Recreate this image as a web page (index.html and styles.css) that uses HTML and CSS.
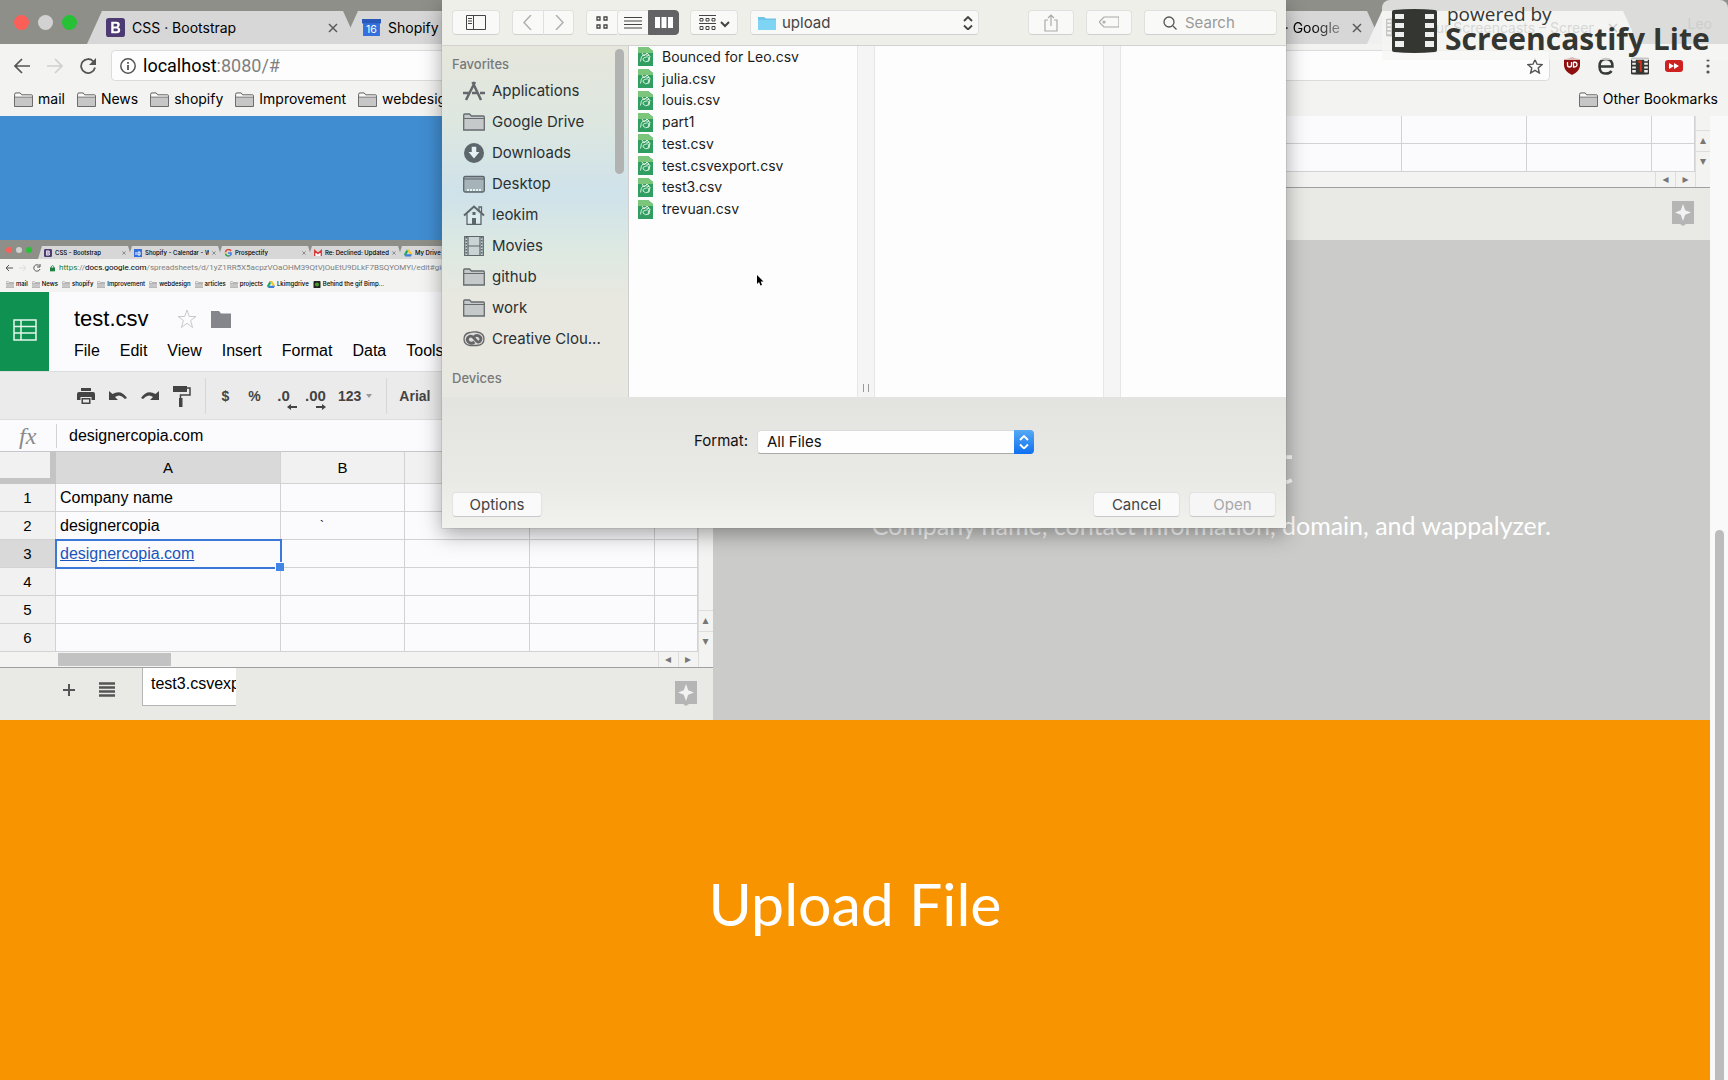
FILE: index.html
```html
<!DOCTYPE html>
<html lang="en">
<head>
<meta charset="utf-8">
<title>Upload File</title>
<link rel="stylesheet" href="styles.css">
</head>
<body>
<svg width="0" height="0" class="defs" aria-hidden="true">
  <symbol id="folder" viewBox="0 0 20 16"><path d="M.5 15.500V2.500Q.5 1 2 1H6.500L8 3H18.500Q19.500 3 19.500 4V15.500Z" fill="#fafafa" stroke="#555"/><path d="M1 6H19V15H1Z" fill="#c6c6c6"/><path d="M1 5.500H19" stroke="#666"/></symbol>
  <symbol id="sfolder" viewBox="0 0 22 18"><path d="M.7 17V2Q.7 1 1.700 1H6.500L8.500 3H20.300Q21.300 3 21.300 4V17Z" fill="#c5c9c9" stroke="#666b6e" stroke-width="1.300"/><path d="M1 5.500H21" stroke="#666b6e"/></symbol>
  <symbol id="explore" viewBox="0 0 22 26"><path d="M0 1H22V24H14L11 26L8 24H0Z" fill="#b5b5b5"/><path d="M11 4L13.200 10.300L19 12.500L13.200 14.700L11 21L8.800 14.700L3 12.500L8.800 10.300Z" fill="#f2f2f2"/></symbol>
  <symbol id="csv" viewBox="0 0 15 19"><path d="M0 0H10L15 4V19H0Z" fill="#2f9e60"/><path d="M0 0H10L15 4V6H0Z" fill="#7cc67b"/><path d="M2.500 14.500Q3 9 5 8T12 9L11 14Q7 16 5 13Q4 11 8 10T10 14M4 6L6 9L9 6L11 8" fill="none" stroke="#d5f0dc"/></symbol>
  <symbol id="close" viewBox="0 0 10 10"><path d="M1 1L9 9M9 1L1 9" stroke="#5a5a5a" stroke-width="1.500"/></symbol>
  <symbol id="drive" viewBox="0 0 14 12"><path d="M5 0H9L14 8H10Z" fill="#f5c518"/><path d="M5 0L0 8L2 12L7 4Z" fill="#1fa463"/><path d="M4 8H14L12 12H2Z" fill="#3c7de0"/></symbol>
  <symbol id="boot" viewBox="0 0 20 20"><rect width="20" height="20" rx="3" fill="#4d3a72"/><path fill-rule="evenodd" d="M5.500 4H11Q14.500 4 14.500 7Q14.500 9 13 9.700Q15 10.300 15 12.800Q15 16 11.300 16H5.500ZM8 6V9H10.500Q12 9 12 7.500Q12 6 10.500 6ZM8 11V14H11Q12.500 14 12.500 12.500Q12.500 11 11 11Z" fill="#fff"/></symbol>
  <symbol id="film" viewBox="0 0 45 44"><path d="M2 1Q22-1 43 1Q45 1 45 3V41Q45 43 43 43Q22 45 2 43Q0 43 0 41V3Q0 1 2 1Z" fill="#343632"/><path d="M3 5H12V10H3ZM3 14H12V19H3ZM3 23H12V28H3ZM3 32H12V38H3ZM33 5H42V10H33ZM33 14H42V19H33ZM33 23H42V28H33ZM33 32H42V38H33Z" fill="#eee"/></symbol>
</svg>

<header class="browser">
  <div class="tabstrip">
    <div class="lights"><i class="red"></i><i class="grey"></i><i class="green"></i></div>
    <nav class="tabs" aria-label="Tabs">
      <div class="tab"><svg class="fav"><use href="#boot"/></svg><span class="grow">CSS · Bootstrap</span><svg class="x"><use href="#close"/></svg></div>
      <div class="tab"><svg class="fav" viewBox="0 0 18 18"><path d="M0 1H18V5H17V17H1V5H0Z" fill="#3470dd"/><path d="M0 1H18V5H0Z" fill="#2a58b8"/><text x="9" y="14" text-anchor="middle" font-size="10" fill="#fff">16</text></svg><span class="grow">Shopify</span></div>
      <div class="tab"></div>
      <div class="tab"></div>
      <div class="tab"><span class="grow end">· Google</span><svg class="x"><use href="#close"/></svg></div>
      <div class="tab active"><svg class="fav"><use href="#film"/></svg><span class="grow">Your Screencasts – Screen</span><svg class="x"><use href="#close"/></svg></div>
    </nav>
    <span class="profile">Leo</span>
  </div>
  <div class="toolbar">
    <svg class="nav" viewBox="0 0 16 16" fill="none" stroke="#555" stroke-width="1.700"><path d="M16 8H1.500M8 1L1 8L8 15"/></svg>
    <svg class="nav" viewBox="0 0 16 16" fill="none" stroke="#d0d0d0" stroke-width="1.700"><path d="M0 8H14.500M8 1L15 8L8 15"/></svg>
    <svg class="nav" viewBox="0 0 16 16"><path d="M13.500 3.500A7 7 0 1 0 15 9.500" fill="none" stroke="#555" stroke-width="1.800"/><path d="M16 0V7H9Z" fill="#555"/></svg>
    <label class="omnibox">
      <svg class="nav" viewBox="0 0 16 16"><circle cx="8" cy="8" r="7.200" fill="none" stroke="#555" stroke-width="1.500"/><path d="M8 7V12M8 4V5.700" stroke="#555" stroke-width="1.800"/></svg>
      <span class="url">localhost<em>:8080/#</em></span>
      <svg class="nav" viewBox="0 0 16 16"><path d="M8 1.500L10 6.200L15 6.600L11.200 9.900L12.400 15L8 12.300L3.600 15L4.800 9.900L1 6.600L6 6.200Z" fill="none" stroke="#555" stroke-width="1.400"/></svg>
    </label>
    <div class="exts">
      <svg viewBox="0 0 18 18"><path d="M9 0Q13 2 17 2V9Q16 15 9 18Q2 15 1 9V2Q5 2 9 0Z" fill="#8e0f10"/><path d="M4.500 5V8Q4.500 10 6.500 10T8.500 8V5M10.500 5V10Q14 10 14 7.500T10.500 5" fill="none" stroke="#fff" stroke-width="1.300"/></svg>
      <svg viewBox="0 0 18 18"><path d="M2 9.500H15.500Q15.500 2 9 2T2.500 9.500T9 16.500Q13 16.500 14.500 14" fill="none" stroke="#343b38" stroke-width="2.500"/></svg>
      <svg viewBox="0 0 45 44"><use href="#film"/><path d="M18 8H27V36H22V14H18Z" fill="#d3301f"/></svg>
      <svg viewBox="0 0 18 18"><rect y="3" width="18" height="12" rx="3" fill="#cf2020"/><path d="M4 6L9 9L4 12ZM9 6L14 9L9 12Z" fill="#fff"/></svg>
      <svg viewBox="0 0 18 18" fill="#555"><circle cx="9" cy="3" r="1.600"/><circle cx="9" cy="9" r="1.600"/><circle cx="9" cy="15" r="1.600"/></svg>
    </div>
  </div>
  <nav class="bookmarks" aria-label="Bookmarks">
    <a href="#"><svg><use href="#folder"/></svg>mail</a>
    <a href="#"><svg><use href="#folder"/></svg>News</a>
    <a href="#"><svg><use href="#folder"/></svg>shopify</a>
    <a href="#"><svg><use href="#folder"/></svg>Improvement</a>
    <a href="#"><svg><use href="#folder"/></svg>webdesign</a>
    <a href="#" class="other"><svg><use href="#folder"/></svg>Other Bookmarks</a>
  </nav>
</header>

<main class="page">
  <div class="content">
    <div class="row">
      <div class="blue"></div>
      <div class="sheet tail">
        <div class="grid-area">
          <div class="grid-main">
            <table class="cells">
              <colgroup><col><col class="c"><col class="c"><col class="c"><col class="e"></colgroup>
              <tr><td></td><td></td><td></td><td></td><td></td></tr>
              <tr><td></td><td></td><td></td><td></td><td></td></tr>
            </table>
            <div class="hscroll"><span class="step">◂</span><span class="step">▸</span></div>
          </div>
          <div class="vscroll"><span class="step">▴</span><span class="step">▾</span></div>
        </div>
        <div class="sheetbar"><svg class="explore"><use href="#explore"/></svg></div>
      </div>
    </div>

    <div class="row">
      <div class="sheet">
        <div class="mini">
          <div class="mini-tabs">
            <div class="mini-lights"><i class="red"></i><i class="grey"></i><i class="green"></i></div>
            <div class="mini-tab"><svg><use href="#boot"/></svg><span>CSS - Bootstrap</span><svg class="mx"><use href="#close"/></svg></div>
            <div class="mini-tab"><svg viewBox="0 0 8 8"><rect width="8" height="8" fill="#3470dd"/><path d="M2 3V6M4 3H6V6H4Z" stroke="#fff" fill="none"/></svg><span>Shopify - Calendar - W</span><svg class="mx"><use href="#close"/></svg></div>
            <div class="mini-tab"><svg viewBox="0 0 8 8" fill="none" stroke-width="1.500"><path d="M7 2A3 3 0 0 0 1.500 3" stroke="#e04030"/><path d="M1.500 3V5" stroke="#f0b818"/><path d="M1.500 5A3 3 0 0 0 6 6.500" stroke="#2ba050"/><path d="M4 4H7V5.500L6 6.500" stroke="#3c7de0"/></svg><span>Prospectify</span><svg class="mx"><use href="#close"/></svg></div>
            <div class="mini-tab"><svg viewBox="0 0 8 8"><path d="M.7 7V1.500L4 4.500L7.300 1.500V7" fill="#fff" stroke="#d33" stroke-width="1.300"/></svg><span>Re: Declined: Updated</span><svg class="mx"><use href="#close"/></svg></div>
            <div class="mini-tab"><svg><use href="#drive"/></svg><span>My Drive</span></div>
          </div>
          <div class="mini-url">
            <svg viewBox="0 0 8 8" fill="none" stroke="#555"><path d="M8 4H1M4 1L1 4L4 7"/></svg>
            <svg viewBox="0 0 8 8" fill="none" stroke="#ddd"><path d="M0 4H7M4 1L7 4L4 7"/></svg>
            <svg viewBox="0 0 8 8" fill="none" stroke="#555"><path d="M6.500 2A3.200 3.200 0 1 0 7 5M7 0V3H4"/></svg>
            <svg class="lock" viewBox="0 0 6 8"><path d="M0 3.500H6V8H0Z" fill="#1b8040"/><path d="M1.300 4V2.500Q3-.5 4.700 2.500V4" fill="none" stroke="#1b8040"/></svg>
            <span><b>https</b>://<u>docs.google.com</u>/spreadsheets/d/1yZ1RR5X5acpzVOaOHM39QtVjOuEtU9DLkF7BSQYOMYI/edit#gid=538967</span>
          </div>
          <div class="mini-marks">
            <span><svg><use href="#folder"/></svg>mail</span><span><svg><use href="#folder"/></svg>News</span><span><svg><use href="#folder"/></svg>shopify</span><span><svg><use href="#folder"/></svg>Improvement</span><span><svg><use href="#folder"/></svg>webdesign</span><span><svg><use href="#folder"/></svg>articles</span><span><svg><use href="#folder"/></svg>projects</span><span><svg><use href="#drive"/></svg>Lkimgdrive</span><span><svg viewBox="0 0 8 8"><rect width="8" height="8" rx="1" fill="#222"/><circle cx="4" cy="4" r="2.300" fill="#4a9b2a"/></svg>Behind the gif Bimp...</span>
          </div>
        </div>
        <div class="doc-head">
          <div class="doc-logo"><svg viewBox="0 0 24 22" fill="none" stroke="#e6f6ec" stroke-width="1.500"><path d="M1 1H23V21H1ZM1 7.500H23M1 14H23M8 1V21"/></svg></div>
          <div class="doc-info">
            <div class="doc-title"><span>test.csv</span>
              <svg class="star" viewBox="0 0 20 20"><path d="M10 1L12.300 7.500H19L13.600 11.500L15.600 18.500L10 14.300L4.400 18.500L6.400 11.500L1 7.500H7.700Z" fill="none" stroke="#c9c9c9"/></svg>
              <svg class="star" viewBox="0 0 20 20"><path d="M0 2H8L10 4.500H20V19H0Z" fill="#85858c"/></svg></div>
            <nav class="doc-menu"><a href="#">File</a><a href="#">Edit</a><a href="#">View</a><a href="#">Insert</a><a href="#">Format</a><a href="#">Data</a><a href="#">Tools</a></nav>
          </div>
        </div>
        <div class="doc-tools">
          <svg viewBox="0 0 18 18" fill="#444"><path d="M4 1H14V4H4ZM2 5H16Q18 5 18 7V13H14.500V10H3.500V13H0V7Q0 5 2 5ZM4.500 11H13.500V17H4.500ZM6 12.500V15.500H12V12.500Z" fill-rule="evenodd"/></svg>
          <svg viewBox="0 0 18 18"><path d="M0 4V13H9L6 10Q11 6 16 12L18 11Q12 2 3.500 7Z" fill="#444"/></svg>
          <svg viewBox="0 0 18 18"><path d="M18 4V13H9L12 10Q7 6 2 12L0 11Q6 2 14.500 7Z" fill="#444"/></svg>
          <svg class="roller" viewBox="0 0 18 22"><path d="M0 1H14V7H0Z" fill="#444"/><path d="M14 3H17V10H7.500V13" fill="none" stroke="#444" stroke-width="1.500"/><path d="M6 13H9.500V22H6Z" fill="#444"/></svg>
          <span class="sep"></span>
          <b class="sym">$</b><b class="sym">%</b>
          <b class="sym dec">.0<svg viewBox="0 0 10 6"><path d="M10 2V4H4V6L0 3L4 0V2Z" fill="#444"/></svg></b>
          <b class="sym dec">.00<svg viewBox="0 0 10 6"><path d="M0 2V4H6V6L10 3L6 0V2Z" fill="#444"/></svg></b>
          <b class="num">123<svg viewBox="0 0 6 4"><path d="M0 0H6L3 4Z" fill="#999"/></svg></b>
          <span class="sep"></span>
          <b>Arial</b>
        </div>
        <div class="formula"><i>fx</i><span>designercopia.com</span></div>
        <div class="grid-area">
          <div class="grid-main">
            <table class="cells">
              <colgroup><col class="n"><col class="a"><col class="b"><col class="c"><col class="c"><col></colgroup>
              <thead><tr><th class="corner"></th><th class="on">A</th><th>B</th><th></th><th></th><th></th></tr></thead>
              <tbody>
              <tr><th>1</th><td>Company name</td><td></td><td></td><td></td><td></td></tr>
              <tr><th>2</th><td>designercopia</td><td class="tick">`</td><td></td><td></td><td></td></tr>
              <tr><th class="on">3</th><td class="sel"><a href="#">designercopia.com</a></td><td></td><td></td><td></td><td></td></tr>
              <tr><th>4</th><td></td><td></td><td></td><td></td><td></td></tr>
              <tr><th>5</th><td></td><td></td><td></td><td></td><td></td></tr>
              <tr><th>6</th><td></td><td></td><td></td><td></td><td></td></tr>
              </tbody>
            </table>
            <div class="hscroll"><span class="thumb"></span><span class="step">◂</span><span class="step">▸</span></div>
          </div>
          <div class="vscroll"><span class="step">▴</span><span class="step">▾</span></div>
        </div>
        <div class="sheetbar">
          <svg class="plus" viewBox="0 0 16 16"><path d="M7 2H9V7H14V9H9V14H7V9H2V7H7Z" fill="#555"/></svg>
          <svg class="list" viewBox="0 0 16 16"><path d="M0 1.500H16M0 5.500H16M0 9.500H16M0 13.500H16" stroke="#555" stroke-width="2.400"/></svg>
          <span class="sheettab">test3.csvexport</span>
          <svg class="explore"><use href="#explore"/></svg>
        </div>
      </div>
      <section class="about">
        <h2>Export</h2>
        <p>Company name, contact information, domain, and wappalyzer.</p>
      </section>
    </div>

    <button class="upload" type="button">Upload File</button>
  </div>
  <div class="scrollbar"><span></span></div>
</main>

<div class="dialog" role="dialog" aria-label="Open file">
  <div class="d-bar">
    <button class="w48"><svg viewBox="0 0 20 15" fill="none" stroke="#444"><path d="M.5.5H19.500V14.500H.5ZM7.500.5V14.500M2 3.500H6M2 6H6M2 8.500H6" /></svg></button>
    <div class="group"><button class="w31"><svg viewBox="0 0 20 15" fill="none" stroke="#b0b0b0" stroke-width="1.500"><path d="M13 0L6 7.500L13 15"/></svg></button><button class="w31"><svg viewBox="0 0 20 15" fill="none" stroke="#b0b0b0" stroke-width="1.500"><path d="M7 0L14 7.500L7 15"/></svg></button></div>
    <div class="group"><button class="w31"><svg viewBox="0 0 20 15" fill="none" stroke="#444" stroke-width="1.300"><path d="M5 2H8V5H5ZM12 2H15V5H12ZM5 10H8V13H5ZM12 10H15V13H12Z"/></svg></button><button class="w31"><svg viewBox="0 0 20 15" fill="none" stroke="#444"><path d="M1 2.500H19M1 6H19M1 9.500H19M1 13H19"/></svg></button><button class="w31 pressed"><svg viewBox="0 0 20 15" fill="#fff"><path d="M1 2H6V13H1ZM7.500 2H12.500V13H7.500ZM14 2H19V13H14Z"/></svg></button></div>
    <button class="w48"><svg class="arrange" viewBox="0 0 32 16" fill="none" stroke="#444"><path d="M1 .5H18M1 8.500H18M2 3.500H5V6H2ZM8 3.500H11V6H8ZM14 3.500H17V6H14ZM2 11.500H5V14.500H2ZM8 11.500H11V14.500H8ZM14 11.500H17V14.500H14Z"/><path d="M23 7L27 11L31 7" stroke-width="2"/></svg></button>
    <button class="path"><svg class="bluef" viewBox="0 0 18 14"><path d="M0 1H6L8 2.500H18V14H0Z" fill="#6cc4e8"/><path d="M0 4H18V14H0Z" fill="#7fd3f3"/></svg><span>upload</span><svg class="updown" viewBox="0 0 10 14" fill="none" stroke="#444" stroke-width="1.800"><path d="M1 5L5 1L9 5M1 9.500L5 13.500L9 9.500"/></svg></button>
    <button class="w46"><svg class="share" viewBox="0 0 14 18" fill="none" stroke="#aaa" stroke-width="1.200"><path d="M4 6H1V17H13V6H10M7 12V1M4 4L7 1L10 4"/></svg></button>
    <button class="w46 tag"><svg viewBox="0 0 20 15" fill="none" stroke="#aaa" stroke-width="1.200"><path d="M5 2H20V12H5L0 7Z"/><circle cx="5" cy="7" r="1"/></svg></button>
    <label class="search"><svg viewBox="0 0 14 14" fill="none" stroke="#555" stroke-width="1.300"><circle cx="6" cy="6" r="5"/><path d="M10 10L13.500 13.500"/></svg><input type="search" placeholder="Search" aria-label="Search"></label>
  </div>
  <div class="d-body">
    <aside>
      <h3>Favorites</h3>
      <ul>
        <li><svg viewBox="0 0 22 20" fill="none" stroke="#62686b" stroke-width="2.500"><path d="M9.500 1L18 19M12 1L3 19M0 12H6M9 12H15M17 12H22"/></svg>Applications</li>
        <li><svg viewBox="0 0 22 18"><use href="#sfolder"/></svg>Google Drive</li>
        <li><svg viewBox="0 0 22 22"><circle cx="11" cy="11" r="11" fill="#5c666b"/><path d="M8.500 4H13.500V10H17L11 17L5 10H8.500Z" fill="#e6f2f4"/></svg>Downloads</li>
        <li><svg viewBox="0 0 22 18"><rect x=".7" y="1.500" width="20.600" height="15.500" rx="1.500" fill="#a6b4b9" stroke="#5c666b" stroke-width="1.300"/><path d="M1 4H21" stroke="#5c666b"/><path d="M4 15H18" stroke="#e6f2f4" stroke-width="2" stroke-dasharray="2 1"/></svg>Desktop</li>
        <li><svg viewBox="0 0 22 20"><path d="M4 9V19.300H18V9M16 7V2H18.500V9" fill="#dcebee" stroke="#5c666b" stroke-width="1.300"/><path d="M1 10.500L11 1.500L21 10.500" fill="none" stroke="#5c666b" stroke-width="2"/><path d="M9 13H13V19H9ZM9.500 7H12.500V10H9.500Z" fill="#5c666b"/></svg>leokim</li>
        <li><svg viewBox="0 0 22 20"><path d="M1.700.5H20.300V19.500H1.700ZM5 .5V19.500M17 .5V19.500M5 10H17" fill="#c9d3d3" stroke="#5c666b" stroke-width="1.200"/><path d="M3.300 1V19M18.700 1V19" stroke="#5c666b" stroke-width="1.500" stroke-dasharray="1.500 1.500"/></svg>Movies</li>
        <li><svg viewBox="0 0 22 18"><use href="#sfolder"/></svg>github</li>
        <li><svg viewBox="0 0 22 18"><use href="#sfolder"/></svg>work</li>
        <li><svg viewBox="0 0 22 16"><path d="M7 1.500Q1 2.500 1 8T7 14.500H14Q21 14 21 8T14 1Q10 .5 7 1.500Z" fill="#ddd" stroke="#666" stroke-width="1.300"/><path d="M11.500 11Q8 13.500 5.500 11T5.500 6Q8 4 10.500 6.500L14 10.500Q16 12 17.500 9.500T16 5Q13 3.500 11 6" fill="none" stroke="#666" stroke-width="2.800"/></svg>Creative Clou...</li>
      </ul>
      <h3>Devices</h3>
      <span class="s-thumb"></span>
    </aside>
    <ul class="files">
      <li><svg><use href="#csv"/></svg>Bounced for Leo.csv</li>
      <li><svg><use href="#csv"/></svg>julia.csv</li>
      <li><svg><use href="#csv"/></svg>louis.csv</li>
      <li><svg><use href="#csv"/></svg>part1</li>
      <li><svg><use href="#csv"/></svg>test.csv</li>
      <li><svg><use href="#csv"/></svg>test.csvexport.csv</li>
      <li><svg><use href="#csv"/></svg>test3.csv</li>
      <li><svg><use href="#csv"/></svg>trevuan.csv</li>
    </ul>
    <div class="gutter"><i></i></div>
    <div class="empty"></div>
    <div class="gutter"></div>
    <div class="last"></div>
  </div>
  <div class="d-format">
    <label for="fmt">Format:</label>
    <div class="select"><select id="fmt"><option>All Files</option></select><span class="stepper"><svg viewBox="0 0 10 14" fill="none" stroke="#fff" stroke-width="1.800"><path d="M1 5L5 1L9 5M1 9.500L5 13.500L9 9.500"/></svg></span></div>
  </div>
  <div class="d-actions"><button class="options">Options</button><button class="cancel">Cancel</button><button disabled>Open</button></div>
</div>

<svg class="cursor" viewBox="0 0 7 11"><path d="M0 0V9L2 7L3.500 10.500L5 10L3.700 6.500H6.500Z"/></svg>

<div class="mark">
  <svg><use href="#film"/></svg>
  <div><span>powered by</span><strong>Screencastify Lite</strong></div>
</div>
</body>
</html>
```
FILE: styles.css
```css
* { box-sizing: border-box; }
html, body { height: 100%; }
body {
  margin: 0;
  display: flex;
  flex-direction: column;
  overflow: hidden;
  background: #f6f6f6;
  color: #1c1c1c;
  font: 14px/20px Inter, "Noto Sans", sans-serif;
}
svg { flex: none; display: block; }
.defs { position: absolute; }
a { color: inherit; text-decoration: none; }
button, input, select { font: inherit; color: inherit; border: 0; padding: 0; margin: 0; }
ul { list-style: none; margin: 0; padding: 0; }
h2, h3, p { margin: 0; font-weight: 400; }
.grow { flex: 1; white-space: nowrap; overflow: hidden; }
.red { background: #fb5f57; }
.grey { background: #d2d2d2; }
.green { background: #26c136; }

/* Browser chrome */
.tabstrip { height: 44px; display: flex; background: #8f8f8a; }
.lights { width: 87px; padding: 15px 0 0 14px; display: flex; gap: 9px; }
.lights i { width: 15px; height: 15px; border-radius: 50%; }
.tabs { display: flex; padding-top: 11px; }
.tab {
  width: 271px;
  margin-right: -15px;
  padding: 0 14px 0 19px;
  display: flex;
  align-items: center;
  gap: 7px;
  background: #d7d7d7;
  clip-path: polygon(0 100%, 15px 0, calc(100% - 15px) 0, 100% 100%);
  color: #000;
}
.tab:nth-child(1) { z-index: 1; }
.fav { width: 19px; height: 19px; }
.x { width: 10px; height: 10px; margin-right: 6px; }
.end { text-align: right; padding-right: 5px; color: transparent; background: linear-gradient(90deg, #000 85%, #aaa) text; }
.active { background: #f0f0f0; gap: 14px; color: #777; }
.profile { margin-left: auto; padding: 14px 16px 0 0; color: #555; }
.toolbar { height: 40px; padding: 6px 13px 3px 14px; display: flex; align-items: center; gap: 17px; background: #f3f3f1; }
.nav { width: 16px; height: 16px; }
.omnibox { flex: 1; height: 31px; margin-left: -2px; padding: 0 6px 0 8px; display: flex; align-items: center; gap: 7px; background: #fdfdfd; border: 1px solid #dcdcdc; border-radius: 4px; }
.url { flex: 1; font: 18px/24px Roboto, sans-serif; color: #000; }
.url em { font-style: normal; color: #808080; }
.exts { display: flex; gap: 16px; margin: 0 -2px 0 -4px; }
.exts svg { width: 18px; height: 18px; }
.bookmarks { height: 32px; padding: 0 10px 2px 14px; display: flex; align-items: center; gap: 12px; background: #f3f3f1; color: #000; }
.bookmarks a { display: flex; align-items: center; gap: 5px; }
.bookmarks svg { width: 19px; height: 15px; }
.other { margin-left: auto; }

/* Page */
.page { flex: 1; display: flex; min-height: 0; }
.content { flex: 1; display: flex; flex-direction: column; }
.row { display: grid; grid-template-columns: 5fr 7fr; }
.row > * { min-width: 0; overflow: hidden; }
.blue { background: #418dd1; }
.scrollbar { width: 18px; padding: 414px 4px 0 5px; background: #f9f9f9; display: flex; }
.scrollbar span { flex: 1; background: #bcbcbc; border-radius: 5px 5px 0 0; }
.about { background: #cbcbc9; color: #fff; text-align: center; padding: 187px 0 0; }
.about h2 { font: 400 56px/72px Lato, sans-serif; }
.about p { font: 400 25px/28px Lato, sans-serif; margin-top: 12px; white-space: nowrap; }
.upload { flex: 1; background: #f79400; color: #fff; font: 400 59px/64px Lato, sans-serif; padding-top: 8px; }

/* Spreadsheet */
.sheet { font: 16px/20px "Liberation Sans", Arial, sans-serif; background: #fbfbfd; color: #000; }
.mini { height: 52px; background: #f3f3f1; font: 500 6px/8px Inter, sans-serif; }
.mini-tabs { height: 19px; padding-top: 6px; display: flex; background: #8f8f8a; }
.mini-lights { width: 38px; padding: 1px 0 0 6px; display: flex; gap: 4px; }
.mini-lights i { width: 6px; height: 6px; border-radius: 50%; }
.mini-tab { width: 94px; margin-right: -4px; padding: 0 6px; display: flex; align-items: center; gap: 3px; background: #d7d7d7; clip-path: polygon(0 100%, 4px 0, calc(100% - 4px) 0, 100% 100%); }
.mini-tab svg { width: 8px; height: 8px; }
.mini-tab span { flex: 1; white-space: nowrap; overflow: hidden; }
.mini-tab .mx { width: 4px; height: 4px; }
.mini-url { height: 18px; padding-left: 5px; display: flex; align-items: center; gap: 6px; font: 8px/10px Roboto, sans-serif; color: #808080; white-space: nowrap; }
.mini-url svg { width: 8px; height: 8px; }
.mini-url .lock { width: 5px; margin: 0 -2px 0 3px; }
.mini-url b { font-weight: 400; color: #1b8040; }
.mini-url u { text-decoration: none; color: #000; }
.mini-marks { height: 14px; padding-left: 6px; display: flex; align-items: center; gap: 4px; white-space: nowrap; }
.mini-marks span { display: flex; align-items: center; gap: 2px; }
.mini-marks svg { width: 8px; height: 7px; }
.doc-head { height: 80px; display: flex; border-bottom: 1px solid #dcdcdc; }
.doc-logo { width: 49px; padding: 27px 12px 0 13px; background: #0f9152; }
.doc-logo svg { width: 24px; height: 22px; }
.doc-info { padding: 12px 0 0 25px; }
.doc-title { display: flex; align-items: center; font-size: 22px; line-height: 30px; }
.doc-title span { width: 103px; }
.star { width: 20px; height: 20px; margin-right: 14px; }
.doc-menu { display: flex; gap: 20px; padding-top: 7px; }
.doc-tools { height: 48px; padding-left: 77px; display: flex; align-items: center; gap: 14px; background: #ebebeb; border-bottom: 1px solid #dcdcdc; color: #444; font-size: 14px; }
.doc-tools > svg { width: 18px; height: 18px; }
.doc-tools > .roller { height: 22px; }
.sep { width: 1px; height: 36px; margin-right: -2px; background: #d6d6d6; }
.sym { width: 15px; text-align: center; }
.dec { position: relative; font-size: 15px; }
.dec svg { position: absolute; right: -6px; bottom: -4px; width: 10px; height: 6px; }
.num { display: flex; align-items: center; gap: 5px; padding-left: 4px; }
.num svg { width: 6px; height: 4px; }
.formula { height: 31px; display: flex; align-items: center; }
.formula i { width: 57px; padding-left: 19px; font: italic 24px/24px "Liberation Serif", serif; color: #8a8a8a; border-right: 1px solid #d2d2d2; }
.formula span { padding-left: 12px; }
.grid-area { display: flex; }
.grid-main { flex: 1; min-width: 0; }
.cells { width: 100%; table-layout: fixed; border-collapse: separate; border-spacing: 0; }
.cells th, .cells td { height: 28px; padding: 0 0 0 4px; border: solid #d2d2d2; border-width: 0 1px 1px 0; font-weight: 400; text-align: left; }
.cells th { padding: 0; background: #f1f1f1; text-align: center; font-size: 15px; }
.cells thead th { height: 33px; border-top: 1px solid #c6c6cc; }
.cells th.on { background: #d9d9d9; }
.cells .corner { border-right: 6px solid #c4c4c4; border-bottom: 6px solid #c4c4c4; }
.n { width: 56px; }
.a { width: 225px; }
.b { width: 124px; }
.c { width: 125px; }
.e { width: 43px; }
.cells .tick { padding-left: 39px; font-size: 12px; }
.sel { position: relative; outline: 2px solid #3b78d8; outline-offset: -1px; }
.sel a { color: #1a55bb; text-decoration: underline; }
.sel::after { content: ""; position: absolute; right: -4px; bottom: -4px; width: 8px; height: 8px; background: #4285e8; border: solid #fff; border-width: 1px 0 0 1px; }
.hscroll { height: 15px; display: flex; justify-content: flex-end; background: #f3f3f1; }
.thumb { width: 113px; margin: 1px auto 1px 58px; background: #c2c2c2; }
.step { width: 20px; border-left: 1px solid #ddd; color: #777; font: 12px/15px "DejaVu Sans", sans-serif; text-align: center; }
.vscroll { width: 15px; padding-bottom: 15px; display: flex; flex-direction: column; justify-content: flex-end; background: #f3f3f1; border-left: 1px solid #ddd; }
.vscroll .step { width: auto; height: 21px; line-height: 18px; border-left: 0; border-top: 1px solid #ddd; }
.sheetbar { height: 53px; padding: 0 16px 0 61px; display: flex; align-items: flex-start; background: #e9e9e6; border-top: 1px solid #a0a0a0; }
.plus, .list { width: 16px; height: 16px; margin-top: 14px; }
.list { margin-left: 22px; }
.sheettab { width: 94px; height: 38px; margin-left: 27px; padding: 6px 0 0 8px; overflow: hidden; background: #fff; border: solid #b5b5b5; border-width: 0 0 1px 1px; }
.explore { width: 22px; height: 26px; margin: 12px 0 0 auto; }

/* File dialog */
.dialog {
  position: absolute;
  top: 0;
  left: 0;
  right: 0;
  width: 844px;
  margin: 0 auto;
  z-index: 2;
  background: #efefec;
  box-shadow: 0 0 1px #777, 0 6px 20px rgba(0, 0, 0, .35);
}
.d-bar { height: 46px; padding: 10px 9px 0 10px; display: flex; align-items: flex-start; border-bottom: 1px solid #d2d2d2; background: #efefea; }
.d-bar button, .search { flex: none; height: 25px; display: flex; align-items: center; justify-content: center; background: #f9f9f8; border: 1px solid #e0e0de; border-bottom-color: #cfcfcf; border-radius: 4px; }
.d-bar svg { width: 20px; height: 15px; }
.d-bar .w48 { width: 48px; }
.d-bar .w46 { width: 46px; }
.d-bar .w31 { width: 31px; }
.group { display: flex; margin-left: 12px; }
.group + .w48 { margin-left: 11px; }
.group button:not(:last-child) { border-radius: 4px 0 0 4px; border-right: 0; }
.group button:last-child { border-radius: 0 4px 4px 0; }
.group .pressed { background: #636366; border-color: #636366; }
.d-bar .arrange { width: 32px; height: 16px; }
.d-bar .path { width: 229px; margin-left: 12px; padding: 0 5px 0 7px; gap: 6px; font-size: 15px; color: #444; }
.path span { flex: 1; text-align: left; }
.d-bar .bluef { width: 18px; height: 14px; }
.d-bar .updown { width: 10px; height: 14px; }
.d-bar .path + .w46 { margin-left: 49px; }
.d-bar .share { width: 14px; height: 18px; }
.d-bar .tag { margin-left: 12px; }
.search { width: 133px; margin-left: 12px; padding-left: 18px; gap: 8px; }
.d-bar .search svg { width: 14px; height: 14px; }
.search input { flex: 1; min-width: 0; background: none; font-size: 15px; outline: 0; }
.search input::placeholder { color: #999; }
.d-body { height: 351px; display: flex; background: #fdfdfd; }
aside { position: relative; width: 187px; padding: 9px 0 0 10px; border-right: 1px solid #cfcfcf; background: linear-gradient(#e6e6dc, #dde7e0 22%, #cfe2ea 42%, #dde9e2 58%, #e8e8e0 72%, #e8e8e2); }
aside h3 { font: 500 13px/18px Inter, sans-serif; color: #77797a; }
aside ul { padding: 2px 0 15px; }
aside li { height: 31px; padding-left: 11px; display: flex; align-items: center; gap: 7px; font-size: 15px; color: #2a3033; }
aside li svg { width: 22px; height: 20px; }
.s-thumb { position: absolute; right: 4px; top: 3px; width: 9px; height: 125px; border-radius: 5px; background: #b0b3b2; }
.files { width: 228px; height: 174px; display: flex; flex-direction: column; }
.files li { flex: 1; padding-left: 9px; display: flex; align-items: center; gap: 9px; }
.files svg { width: 15px; height: 19px; }
.gutter { width: 18px; padding-bottom: 5px; display: flex; justify-content: center; align-items: flex-end; background: #f5f5f5; border: solid #e6e6e6; border-width: 0 1px; }
.gutter i { width: 6px; height: 8px; border: solid #999; border-width: 0 1px; }
.empty { width: 228px; }
.last { flex: 1; }
.d-format { padding: 33px 252px 0 0; height: 82px; display: flex; justify-content: flex-end; gap: 9px; font-size: 15px; line-height: 22px; color: #111; background: linear-gradient(#e3e3e0, #e9e9e6); }
.select { position: relative; width: 277px; height: 24px; }
.select select { width: 100%; height: 24px; padding-left: 9px; appearance: none; background: #fefefe; border: 1px solid #dcdcdc; border-bottom-color: #aaa; border-radius: 4px; }
.stepper { position: absolute; right: 0; top: 0; width: 20px; height: 24px; padding: 5px; border-radius: 0 4px 4px 0; background: linear-gradient(#56a9f4, #0f70f0); pointer-events: none; }
.stepper svg { width: 10px; height: 14px; }
.d-actions { height: 49px; padding: 13px 10px 0 10px; display: flex; gap: 9px; background: linear-gradient(#e9e9e6, #f1f1ee); }
.d-actions button { width: 87px; height: 25px; font-size: 15px; color: #444; background: #fafafa; border: 1px solid #e2e2e2; border-bottom-color: #c8c8cc; border-radius: 4px; }
.d-actions .options { width: 90px; }
.d-actions .cancel { margin-left: auto; }
.d-actions button:disabled { color: #a8a8a8; background: #f6f6f6; }
.cursor { position: absolute; left: 757px; top: 275px; width: 7px; height: 11px; z-index: 3; }

/* Recorder watermark */
.mark { position: absolute; top: 0; right: 0; width: 346px; height: 60px; padding: 0 10px 0 10px; display: flex; gap: 8px; z-index: 1; border-radius: 8px 8px 0 0; background: rgba(246, 246, 244, .75); color: #343632; font-family: "Open Sans", sans-serif; }
.mark > svg { width: 45px; height: 44px; margin-top: 9px; }
.mark div { display: flex; flex-direction: column; white-space: nowrap; }
.mark span { font-size: 19px; line-height: 26px; padding: 1px 0 0 2px; }
.mark strong { font-size: 30px; font-weight: 700; line-height: 24px; }
```
